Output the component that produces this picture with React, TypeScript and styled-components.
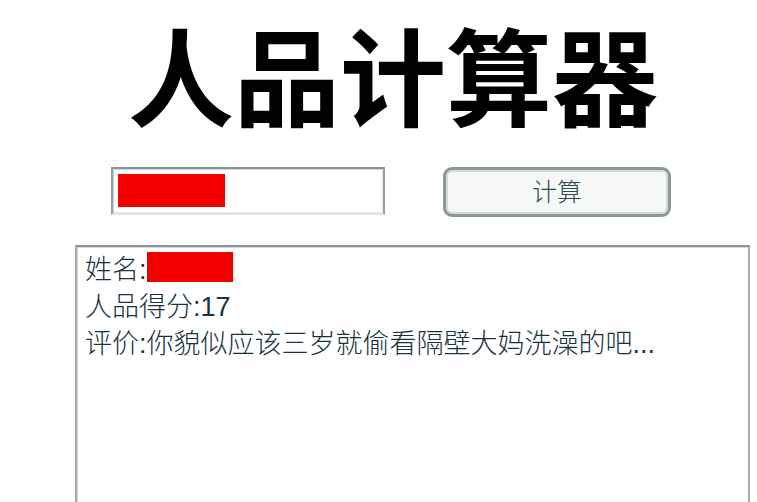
import React from 'react';
import styled, { createGlobalStyle } from 'styled-components';

const GlobalStyle = createGlobalStyle`
  html, body {
    margin: 0;
    padding: 0;
    background: #ffffff;
  }

  body {
    font-family: "Liberation Sans", "Noto Sans CJK SC", sans-serif;
    overflow: hidden;
  }
`;

const result = {
  score: 17,
  comment: '你貌似应该三岁就偷看隔壁大妈洗澡的吧...',
};

export default function App() {
  return (
    <>
      <GlobalStyle />
      <Page>
        <Title>人品计算器</Title>
        <FormRow>
          <NameInput>
            <Redacted $width={107} $height={33} />
          </NameInput>
          <CalcButton type="button">计算</CalcButton>
        </FormRow>
        <ResultBox>
          <ResultLine>
            姓名:<Redacted $width={86} $height={30} />
          </ResultLine>
          <ResultLine>人品得分:{result.score}</ResultLine>
          <ResultLine>评价:{result.comment}</ResultLine>
        </ResultBox>
      </Page>
    </>
  );
}

const Page = styled.div`
  box-sizing: border-box;
  width: 757px;
  padding: 9px 0 0 29px;
`;

const Title = styled.h1`
  margin: 0;
  font-family: "Noto Sans CJK SC", sans-serif;
  font-size: 106px;
  font-weight: bold;
  line-height: 1.2;
  text-align: center;
  color: #000000;
`;

const FormRow = styled.div`
  display: flex;
  align-items: flex-start;
  gap: 58px;
  margin-top: 31px;
  padding-left: 82px;
`;

const NameInput = styled.div`
  box-sizing: border-box;
  width: 274px;
  height: 48px;
  padding: 5px;
  border: 2px solid;
  border-color: #8a9393 #97a0a0 #dde3e3 #97a0a0;
  box-shadow: inset 1px 1px 0 #cdd4d4, inset -1px -1px 0 #e4e9e9;
  background: #ffffff;
`;

const Redacted = styled.span<{ $width: number; $height: number }>`
  display: inline-block;
  width: ${(p) => p.$width}px;
  height: ${(p) => p.$height}px;
  background: #f20000;
  vertical-align: top;
`;

const CalcButton = styled.button`
  box-sizing: border-box;
  width: 228px;
  height: 50px;
  padding: 0 0 5px;
  border: 3px solid #8e9696;
  border-radius: 9px;
  box-shadow: inset 0 0 0 2px #d3dada;
  background: #f6f7f7;
  font-family: "Noto Sans CJK SC", sans-serif;
  font-weight: 300;
  font-size: 25px;
  color: #2e4a54;
  cursor: pointer;
`;

const ResultBox = styled.div`
  box-sizing: border-box;
  width: 675px;
  height: 320px;
  margin: 28px 0 0 46px;
  padding: 5px 8px 3px;
  border: 2px solid;
  border-color: #8d9696 #a5adad #a5adad #a5adad;
  box-shadow: inset 1px 1px 0 #d3d9d9;
  background: #ffffff;
`;

const ResultLine = styled.div`
  font-family: "Liberation Sans", "Noto Sans CJK SC", sans-serif;
  font-weight: 300;
  font-size: 27px;
  line-height: 37px;
  color: #17343e;
  white-space: nowrap;
`;
